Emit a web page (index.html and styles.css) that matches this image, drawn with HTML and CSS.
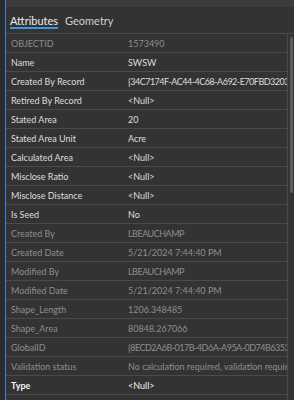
FILE: index.html
```html
<!DOCTYPE html>
<html lang="en">
<head>
    <meta charset="UTF-8">
    <meta name="viewport" content="width=device-width, initial-scale=1.0">
    <title>Attributes</title>
    <link rel="stylesheet" href="styles.css">
</head>
<body>
    <div class="shell">
        <div class="edge"></div>
        <div class="accent"></div>
        <div class="panel">
            <div class="topbar"></div>
            <div class="tabs">
                <span class="tab active">Attributes</span>
                <span class="tab">Geometry</span>
            </div>
            <div class="content">
                <div class="grid">
                    <div class="row ro"><span class="name">OBJECTID</span><span class="value">1573490</span></div>
                    <div class="row"><span class="name">Name</span><span class="value">SWSW</span></div>
                    <div class="row"><span class="name">Created By Record</span><span class="value caps">{34C7174F-AC44-4C68-A692-E70FBD3203E8}</span></div>
                    <div class="row"><span class="name">Retired By Record</span><span class="value">&lt;Null&gt;</span></div>
                    <div class="row"><span class="name">Stated Area</span><span class="value">20</span></div>
                    <div class="row"><span class="name">Stated Area Unit</span><span class="value">Acre</span></div>
                    <div class="row"><span class="name">Calculated Area</span><span class="value">&lt;Null&gt;</span></div>
                    <div class="row"><span class="name">Misclose Ratio</span><span class="value">&lt;Null&gt;</span></div>
                    <div class="row"><span class="name">Misclose Distance</span><span class="value">&lt;Null&gt;</span></div>
                    <div class="row"><span class="name">Is Seed</span><span class="value">No</span></div>
                    <div class="row ro"><span class="name">Created By</span><span class="value caps">LBEAUCHAMP</span></div>
                    <div class="row ro"><span class="name">Created Date</span><span class="value">5/21/2024 7:44:40 PM</span></div>
                    <div class="row ro"><span class="name">Modified By</span><span class="value caps">LBEAUCHAMP</span></div>
                    <div class="row ro"><span class="name">Modified Date</span><span class="value">5/21/2024 7:44:40 PM</span></div>
                    <div class="row ro"><span class="name">Shape_Length</span><span class="value">1206.348485</span></div>
                    <div class="row ro"><span class="name">Shape_Area</span><span class="value">80848.267066</span></div>
                    <div class="row ro"><span class="name">GlobalID</span><span class="value caps">{8ECD2A6B-017B-4D6A-A95A-0D74B6353A1F}</span></div>
                    <div class="row ro"><span class="name">Validation status</span><span class="value">No calculation required, validation required</span></div>
                    <div class="row strong"><span class="name">Type</span><span class="value">&lt;Null&gt;</span></div>
                    <div class="row"><span class="name">&nbsp;</span><span class="value"></span></div>
                </div>
                <div class="scroll">
                    <div class="thumb"></div>
                </div>
            </div>
        </div>
    </div>
</body>
</html>
```

FILE: styles.css
```css
* {
    font-family: Lato, "Liberation Sans", sans-serif;
}

body {
    margin: 0;
    background-color: #333333;
    overflow: hidden;
}

.shell {
    display: flex;
    height: 400px;
}

.edge {
    width: 5px;
    background-color: #2b2b2b;
}

.accent {
    width: 1px;
    background-color: #3d84d4;
}

.panel {
    flex: 1;
    display: flex;
    flex-direction: column;
    min-width: 0;
}

.topbar {
    height: 7px;
    background-color: #3c3c3c;
}

.tabs {
    height: 27px;
    box-sizing: border-box;
    display: flex;
    align-items: flex-end;
    gap: 7px;
    padding: 0 4px 4px;
    border-bottom: 1px solid #4a4a4a;
}

.tab {
    font-size: 11px;
    line-height: 12px;
    color: #cfcfcf;
    border-bottom: 2px solid transparent;
}

.tab.active {
    color: #ececec;
    border-bottom-color: #3f95e0;
}

.content {
    flex: 1;
    display: flex;
    min-height: 0;
}

.grid {
    width: 281px;
    border-right: 1px solid #4a4a4a;
    overflow: hidden;
}

.row {
    display: flex;
    height: 18px;
    align-items: center;
    border-bottom: 1px solid #4a4a4a;
    font-size: 9px;
    color: #dedede;
    white-space: nowrap;
}

.row.ro {
    color: #8e8e8e;
}

.row.strong {
    color: #f2f2f2;
    font-weight: bold;
}

.row.strong .value {
    font-weight: normal;
}

.name {
    width: 117px;
    padding-left: 5px;
    flex-shrink: 0;
}

.value {
    flex: 1;
    overflow: hidden;
}

/* upper case ids run a little narrower in the original */
.value.caps {
    letter-spacing: -0.5px;
}

.scroll {
    flex: 1;
    padding: 3px 1px 0 2px;
}

.thumb {
    height: 156px;
    border-radius: 2px;
    background-color: #5e5e5e;
}
```
